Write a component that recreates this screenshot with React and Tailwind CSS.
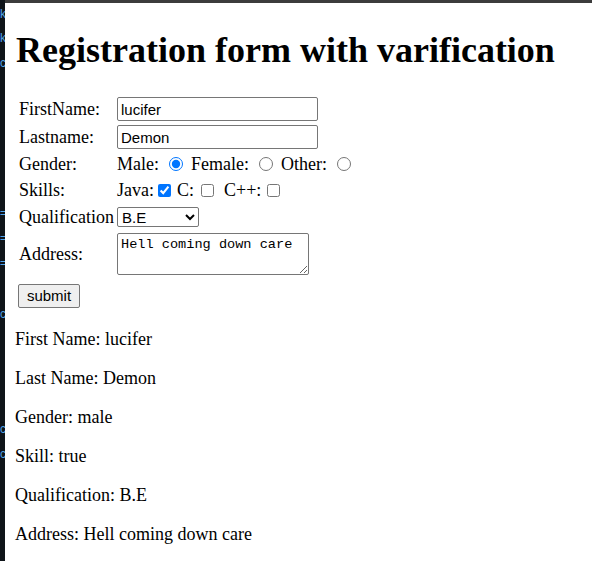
import React from 'react';

const serif = "font-['Liberation_Serif','Times_New_Roman',serif]";
const sans = "font-['Liberation_Sans',Arial,sans-serif]";

function Row({ label, children, className = '' }) {
    return (
        <div className={`flex items-center ${className}`}>
            <div className="w-[98px] shrink-0 whitespace-nowrap">{label}</div>
            <div className="flex items-center">{children}</div>
        </div>
    );
}

export default function App() {
    const results = [
        'First Name: lucifer',
        'Last Name: Demon',
        'Gender: male',
        'Skill: true',
        'Qualification: B.E',
        'Address: Hell coming down care',
    ];

    return (
        <div className="flex h-[561px] w-[592px] overflow-hidden bg-white">
            {/* editor strip on the left */}
            <div className={`w-[5px] shrink-0 bg-[#0f1419] text-[#4fa3e8] text-[12px] overflow-hidden ${sans}`}>
                <div className="h-[12px] leading-[12px] mt-[8px]">k</div>
                <div className="h-[12px] leading-[12px] mt-[12px]">k</div>
                <div className="h-[12px] leading-[12px] mt-[13px]">c</div>
                <div className="h-[12px] leading-[12px] mt-[138px]">=</div>
                <div className="h-[12px] leading-[12px] mt-[13px]">=</div>
                <div className="h-[12px] leading-[12px] mt-[13px]">=</div>
                <div className="h-[12px] leading-[12px] mt-[39px]">c</div>
                <div className="h-[12px] leading-[12px] mt-[103px]">c</div>
                <div className="h-[12px] leading-[12px] mt-[13px]">c</div>
            </div>

            <div className="flex-1 flex flex-col">
                <div className="h-[3px] bg-[#3c3c3c]" />
                <div className={`pl-[10px] text-black ${serif} text-[18px]`}>
                    <h1 className="text-[36px] font-bold leading-[40px] mt-[27px] mb-[27px] ml-[1px]">
                        Registration form with varification
                    </h1>

                    <form className="flex flex-col pl-[4px]" onSubmit={(e) => e.preventDefault()}>
                        <Row label="FirstName:" className="h-[24px]">
                            <input type="text" defaultValue="lucifer" className={`w-[201px] h-[24px] border border-[#767676] rounded-[2px] px-[3px] text-[15px] ${sans}`} />
                        </Row>
                        <Row label="Lastname:" className="h-[24px] mt-[4px]">
                            <input type="text" defaultValue="Demon" className={`w-[201px] h-[24px] border border-[#767676] rounded-[2px] px-[3px] text-[15px] ${sans}`} />
                        </Row>
                        <Row label="Gender:" className="h-[24px] mt-[3px]">
                            <span>Male:</span>
                            <input type="radio" name="g" defaultChecked className="w-[14px] h-[14px] ml-[10px] mr-[8px] accent-[#0075ff]" />
                            <span>Female:</span>
                            <input type="radio" name="g" className="w-[14px] h-[14px] ml-[10px] mr-[8px]" />
                            <span>Other:</span>
                            <input type="radio" name="g" className="w-[14px] h-[14px] ml-[10px]" />
                        </Row>
                        <Row label="Skills:" className="h-[24px] mt-[2px]">
                            <span>Java:</span>
                            <input type="checkbox" defaultChecked className="w-[13px] h-[13px] ml-[4px] mr-[6px] accent-[#0075ff]" />
                            <span>C:</span>
                            <input type="checkbox" className="w-[13px] h-[13px] ml-[7px] mr-[10px]" />
                            <span>C++:</span>
                            <input type="checkbox" className="w-[13px] h-[13px] ml-[6px]" />
                        </Row>
                        <Row label="Qualification" className="h-[24px] mt-[3px]">
                            <select defaultValue="B.E" className={`w-[82px] h-[20px] border border-[#767676] rounded-[2px] text-[15px] ${sans}`}>
                                <option>B.E</option>
                                <option>B.Tech</option>
                                <option>M.E</option>
                            </select>
                        </Row>
                        <Row label="Address:" className="h-[44px] mt-[3px]">
                            <textarea defaultValue="Hell coming down care" className="w-[192px] h-[42px] border border-[#767676] rounded-[2px] px-[3px] py-[3px] text-[13.6px] leading-[16px] font-['Liberation_Mono','Courier_New',monospace]" />
                        </Row>
                        <div className="mt-[6px]">
                            <button type="submit" className={`h-[24px] w-[62px] -ml-[1px] border border-[#767676] rounded-[2px] bg-[#efefef] text-[15px] ${sans}`}>
                                submit
                            </button>
                        </div>
                    </form>

                    <div className="mt-[20px] flex flex-col gap-[18px]">
                        {results.map((r) => (
                            <p key={r} className="leading-[21px]">{r}</p>
                        ))}
                    </div>
                </div>
            </div>
        </div>
    );
}
